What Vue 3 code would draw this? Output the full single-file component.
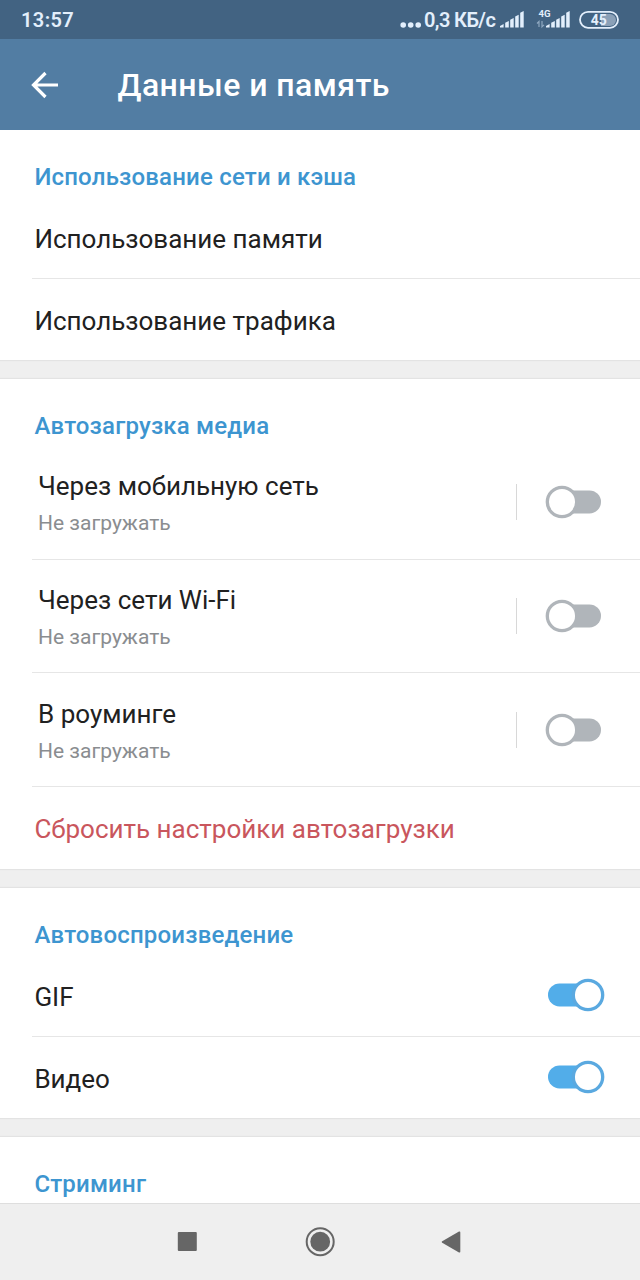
<template>
  <div class="screen">
    <div class="status-bar">
      <span class="clock">13:57</span>
      <div class="status-right">
        <svg class="dots" width="22" height="39" viewBox="0 0 22 39">
          <circle cx="3.2" cy="25" r="2.8" />
          <circle cx="10.7" cy="25" r="2.8" />
          <circle cx="18.2" cy="25" r="2.8" />
        </svg>
        <span class="speed">0,3 КБ/с</span>
        <svg class="signal" width="24" height="39" viewBox="0 0 24 39">
          <path v-for="bar in bars" :key="bar" :d="bar" />
        </svg>
        <svg class="signal-4g" width="34" height="39" viewBox="0 0 34 39">
          <text x="2.6" y="17" class="net">4G</text>
          <path class="arrows" d="M3 27V21.5L1 23.5M6 21V26.8L8 24.8" />
          <g transform="translate(10 0)">
            <path v-for="bar in bars" :key="bar" :d="bar" />
          </g>
        </svg>
        <svg class="battery" width="42" height="39" viewBox="0 0 42 39">
          <path class="level" d="M23 14H32A5.8 5.8 0 0 1 32 26H23Z" />
          <rect class="shell" x="2" y="11.8" width="38" height="16" rx="8" />
          <text x="20.7" y="25" class="percent">45</text>
        </svg>
      </div>
    </div>

    <header class="toolbar">
      <svg class="back" width="30" height="30" viewBox="0 0 30 30">
        <path d="M28 15H4.5M15.5 3L3.5 15L15.5 27" />
      </svg>
      <h1>Данные и память</h1>
    </header>

    <main class="content">
      <section>
        <h2>Использование сети и кэша</h2>
        <div class="row">Использование памяти</div>
        <div class="row">Использование трафика</div>
      </section>

      <section>
        <h2>Автозагрузка медиа</h2>
        <div v-for="item in downloads" :key="item.title" class="row tall">
          <div class="labels">
            <div class="title">{{ item.title }}</div>
            <div class="sub">{{ item.sub }}</div>
          </div>
          <span class="split"></span>
          <svg class="toggle off" width="58" height="34" viewBox="0 0 58 34">
            <rect x="5" y="5.4" width="51" height="23" rx="11.5" />
            <circle cx="17" cy="17" r="14.7" />
          </svg>
        </div>
        <div class="row reset">Сбросить настройки автозагрузки</div>
      </section>

      <section>
        <h2>Автовоспроизведение</h2>
        <div v-for="name in autoplay" :key="name" class="row">
          <span class="name">{{ name }}</span>
          <svg class="toggle on" width="58" height="34" viewBox="0 0 58 34">
            <rect x="1" y="5.4" width="51" height="23" rx="11.5" />
            <circle cx="41" cy="17" r="14.7" />
          </svg>
        </div>
      </section>

      <section class="last">
        <h2>Стриминг</h2>
      </section>
    </main>

    <nav class="nav-bar">
      <svg width="20" height="20" viewBox="0 0 20 20">
        <rect x="0.8" y="0" width="19" height="19" rx="1" />
      </svg>
      <svg class="home" width="30" height="30" viewBox="0 0 30 30">
        <circle class="ring" cx="15.2" cy="14.7" r="13.5" />
        <circle cx="15.2" cy="14.7" r="9.9" />
      </svg>
      <svg width="20" height="22" viewBox="0 0 20 22">
        <path d="M18 0.6Q19.3 0 19.3 1.4V20.6Q19.3 22 18 21.4L1.2 11.8Q0 11 1.2 10.2Z" />
      </svg>
    </nav>
  </div>
</template>

<script setup>
import { ref } from "vue";

const downloads = ref([
  { title: "Через мобильную сеть", sub: "Не загружать" },
  { title: "Через сети Wi-Fi", sub: "Не загружать" },
  { title: "В роуминге", sub: "Не загружать" },
]);

const autoplay = ["GIF", "Видео"];

// signal bars, from the shortest to the tallest
const bars = [
  "M0 27.5V26L3.6 24V27.5Z",
  "M5.2 27.5V22.8L8.8 21V27.5Z",
  "M10.2 27.5V19.8L13.7 18V27.5Z",
  "M15.2 27.5V16.6L18.7 14.8V27.5Z",
  "M20.2 27.5V12.8L23.7 11V27.5Z",
];
</script>

<style>
body {
  background: #efefef;
}
</style>

<style scoped>
.screen {
  display: flex;
  flex-direction: column;
  width: 640px;
  height: 1280px;
  overflow: hidden;
  background: #efefef;
  font-family: Roboto, "Noto Sans", sans-serif;
  color: #212121;
}

.status-bar {
  display: flex;
  justify-content: space-between;
  height: 39px;
  padding: 0 20px 0 21px;
  background: #426382;
  color: #e3effc;
  line-height: 40px;
  font-weight: 500;
}

.clock {
  font-size: 20px;
  font-weight: 600;
  letter-spacing: 0.4px;
}

.status-right {
  display: flex;
}

.status-right svg {
  fill: #e3effc;
}

.dots {
  margin-right: 2px;
}

.speed {
  width: 76px;
  font-size: 20px;
  font-weight: 600;
  letter-spacing: -0.6px;
  white-space: nowrap;
}

.signal-4g {
  margin-left: 12px;
}

.net {
  font-size: 9.6px;
  font-weight: 700;
}

.signal-4g .arrows {
  fill: none;
  stroke: #8fa8c0;
  stroke-width: 1.2;
}

.battery {
  margin-left: 8px;
}

.battery .level {
  fill: #8ba1b8;
}

.battery .shell {
  fill: none;
  stroke: #e3effc;
  stroke-width: 1.8;
}

.percent {
  font-size: 14px;
  font-weight: 700;
  text-anchor: middle;
}

.toolbar {
  display: flex;
  align-items: center;
  box-sizing: border-box;
  height: 91px;
  padding-left: 30px;
  background: #527da3;
  color: #fff;
}

.back {
  margin-right: 57.5px;
  fill: none;
  stroke: #fff;
  stroke-width: 3.2;
}

h1 {
  margin: 0;
  font-size: 32px;
  font-weight: 500;
  letter-spacing: 0.45px;
  line-height: 38px;
  white-space: nowrap;
}

.content {
  display: flex;
  flex: 1;
  flex-direction: column;
  gap: 19px;
  overflow: hidden;
}

section {
  flex: none;
  background: #fff;
  box-shadow: 0 0 1px 1px #e3e3e3;
}

h2 {
  box-sizing: border-box;
  height: 67px;
  margin: 0;
  padding: 32px 0 0 34.4px;
  color: #3d95d0;
  font-size: 24px;
  font-weight: 500;
  letter-spacing: 0.18px;
  line-height: 30px;
}

.row {
  display: flex;
  align-items: center;
  box-sizing: border-box;
  height: 82px;
  margin-left: 32px;
  padding: 2px 35px 0 2.4px;
  border-bottom: 1px solid #e6e6e6;
  font-size: 26px;
  line-height: 32px;
  white-space: nowrap;
}

.row:last-child {
  height: 81px;
  border-bottom: none;
}

.row.tall {
  height: 113.67px;
  padding: 0 36px 0 6px;
}

.row.reset {
  height: 82px;
}

.labels,
.name {
  flex: 1;
}

.labels {
  padding-top: 3px;
}

.name {
  padding-top: 1px;
}

.sub {
  margin-top: 7px;
  color: #8a8d90;
  font-size: 21px;
  line-height: 28px;
}

.split {
  width: 1px;
  height: 36px;
  margin-right: 28px;
  background: #d8d8d8;
}

.toggle {
  flex: none;
}

.off {
  margin-right: 1px;
}

.on {
  margin-top: -2px;
}

.toggle circle {
  fill: #fff;
  stroke-width: 3.3;
}

.off rect {
  fill: #b0b5ba;
}

.off circle {
  stroke: #b0b5ba;
}

.on rect {
  fill: #52ade9;
}

.on circle {
  stroke: #5aa9e0;
}

.reset {
  color: #c9565d;
}

.last {
  height: 80px;
}

.nav-bar {
  display: flex;
  flex: none;
  align-items: center;
  justify-content: space-between;
  box-sizing: border-box;
  height: 77px;
  padding: 0 179px 0 177px;
  border-top: 1px solid #dedede;
  background: #efefef;
}

.nav-bar svg {
  fill: #666;
}

.nav-bar .home {
  margin-left: 2px;
}

.nav-bar .ring {
  fill: none;
  stroke: #666;
  stroke-width: 2;
}
</style>
